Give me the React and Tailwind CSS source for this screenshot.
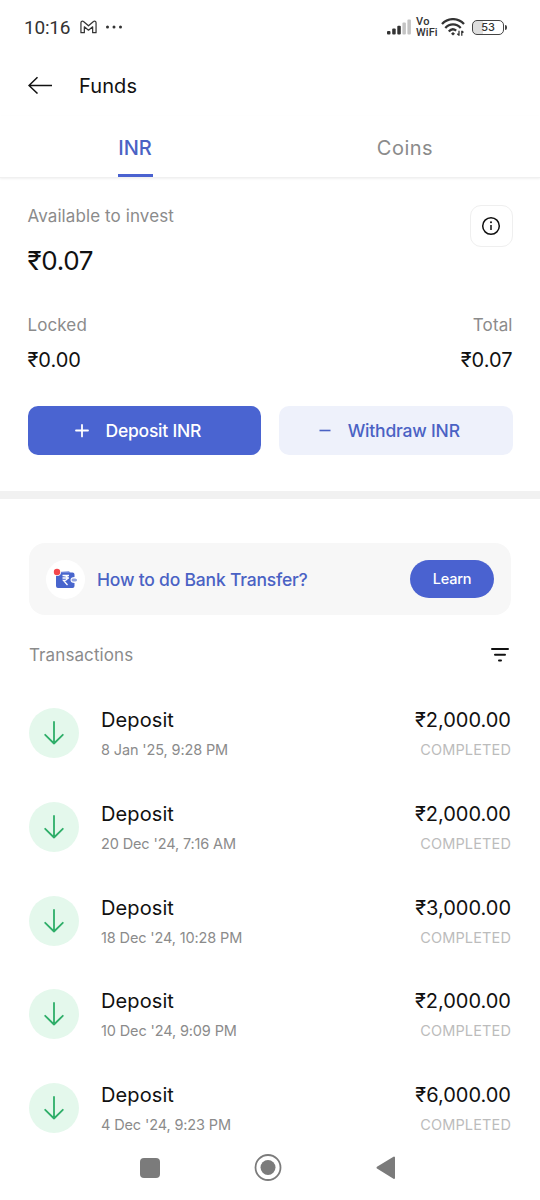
const transactions = [
  { date: "8 Jan '25, 9:28 PM", amount: '₹2,000.00' },
  { date: "20 Dec '24, 7:16 AM", amount: '₹2,000.00' },
  { date: "18 Dec '24, 10:28 PM", amount: '₹3,000.00' },
  { date: "10 Dec '24, 9:09 PM", amount: '₹2,000.00' },
  { date: "4 Dec '24, 9:23 PM", amount: '₹6,000.00' },
];

function StatusBar() {
  return (
    <div className="flex h-[54px] items-center pl-6 pr-[33px] text-[#333]">
      <span className="w-[47px] whitespace-nowrap pt-[2px] font-[Roboto,sans-serif] text-[19px] leading-6 tracking-[-0.2px]">10:16</span>
      <svg className="ml-[9px]" width="17" height="14" viewBox="0 0 18 14" fill="none" stroke="currentColor" strokeWidth="1.3" strokeLinejoin="round">
        <path d="M1 2.6C1 .8 2.7.3 3.7 1.2L9 5.700l5.300-4.500C15.300.3 17 .8 17 2.600V13h-3.600V6.800L9 10.400 4.600 6.800V13H1Z" />
      </svg>
      <svg className="ml-2" width="18" height="4" viewBox="0 0 18 4" fill="currentColor">
        <circle cx="2.500" cy="2" r="1.500" /><circle cx="9" cy="2" r="1.500" /><circle cx="15.500" cy="2" r="1.500" />
      </svg>
      <div className="ml-auto flex items-center">
        <svg width="24" height="16" viewBox="0 0 24 16" fill="currentColor">
          <rect x="0" y="12" width="3.500" height="3.500" rx="1" />
          <rect x="5.200" y="9.500" width="3.500" height="6" rx="1" />
          <rect x="10.300" y="6.800" width="3.500" height="8.700" rx="1" />
          <rect x="15.400" y="3.600" width="3.500" height="11.900" rx="1" fill="#c4c4c4" />
          <rect x="20.400" y="0.500" width="3.500" height="15" rx="1" fill="#c4c4c4" />
        </svg>
        <div className="ml-[5px] flex w-[22px] flex-col font-[Roboto,sans-serif] text-[11px] font-medium leading-[11px]">
          <span className="tracking-[0.5px]">Vo</span>
          <span className="tracking-[0.1px]">WiFi</span>
        </div>
        <svg className="ml-[3px]" width="24" height="18" viewBox="0 0 24 18" fill="none" stroke="currentColor" strokeWidth="2.300">
          <path d="M1 6C7-.5 17-.5 23 6M4.300 9.900C8.500 5.200 15.500 5.200 19.700 9.900M7.800 13.500c2.300-2.600 5.100-2.600 7.400-.9" />
          <path d="M12 13.900l2 1.800-2 1.800-2-1.800Z" fill="currentColor" stroke="none" />
          <path d="M18 12.800v5M20.800 12.800v5M16.300 15.800l1.700 1.500M22.500 14.500l-1.700-1.500" strokeWidth="1.300" />
        </svg>
        <div className="ml-[7px] flex h-[15px] w-[32px] items-center justify-center rounded-[5px] border-[1.500px] border-[#444] bg-linear-to-r from-[#dedede] from-35% to-white to-35% font-['Inter',sans-serif] text-[11px] font-medium leading-none">53</div>
        <div className="ml-px h-[5px] w-[2px] rounded-r-sm bg-[#444]" />
      </div>
    </div>
  );
}

function Header() {
  return (
    <header className="flex h-[62px] items-center pl-7">
      <svg width="25" height="18" viewBox="0 0 25 18" fill="none" stroke="#111" strokeWidth="1.500">
        <path d="M24 9.500H1M9.500 1.200 1 9.500l8.500 8" />
      </svg>
      <h1 className="ml-[26px] pt-px text-[20px] leading-6 tracking-[0.1px]">Funds</h1>
    </header>
  );
}

function Tabs() {
  return (
    <nav className="grid h-[62px] grid-cols-2 border-b border-[#f0f0f0] text-[20px] shadow-[0_1px_2px_rgba(0,0,0,0.06)]">
      <div className="flex flex-col items-center justify-between pt-5">
        <span className="font-medium leading-6 text-[#4a62c4]">INR</span>
        <span className="h-[3px] w-[35px] bg-[#4a62d0]" />
      </div>
      <div className="pt-5 text-center leading-6 tracking-[0.5px] text-[#8b8b8b]">Coins</div>
    </nav>
  );
}

function Balance() {
  return (
    <section className="h-[321px] border-b-8 border-[#f1f1f1] pl-[27.500px] pr-[27.500px] pt-[26px]">
      <div className="flex h-[109px] justify-between">
        <div>
          <p className="text-[17px] leading-6 tracking-[0.1px] text-[#8b8b8b]">Available to invest</p>
          <p className="mt-[17px] text-[26px] leading-8 tracking-[-0.300px]">₹0.07</p>
        </div>
        <div className="mt-[0.500px] flex size-[42.500px] items-center justify-center rounded-[11px] border border-[#efefef]">
          <svg width="20" height="20" viewBox="0 0 20 20" fill="none" stroke="#111" strokeWidth="1.500">
            <circle cx="10" cy="10" r="8.300" />
            <path d="M10 9v5" />
            <circle cx="10" cy="6.200" r="1" fill="#111" stroke="none" />
          </svg>
        </div>
      </div>
      <div className="flex justify-between">
        <div>
          <p className="text-[17px] leading-6 tracking-[0.1px] text-[#8b8b8b]">Locked</p>
          <p className="mt-[11px] text-[20px] leading-6">₹0.00</p>
        </div>
        <div className="text-right">
          <p className="text-[17px] leading-6 tracking-[0.1px] text-[#8b8b8b]">Total</p>
          <p className="mt-[11px] text-[20px] leading-6">₹0.07</p>
        </div>
      </div>
      <div className="mt-[34px] grid grid-cols-2 gap-[17.500px] text-[17.500px] font-medium">
        <button className="flex h-[49px] items-center rounded-[10px] bg-[#4a64d1] pl-[47.500px] text-white">
          <svg width="14" height="14" viewBox="0 0 14 14" stroke="currentColor" strokeWidth="1.800" strokeLinecap="round"><path d="M1 6.500h12M7 .9v11.500" /></svg>
          <span className="ml-[16.500px] pt-[2px] tracking-[-0.220px]">Deposit INR</span>
        </button>
        <button className="flex h-[49px] items-center rounded-[10px] bg-[#eef1fb] pl-[40px] text-[#4a62c4]">
          <svg width="12" height="4" viewBox="0 0 12 4" stroke="currentColor" strokeWidth="1.600"><path d="M.5 1.500h11" /></svg>
          <span className="ml-[17px] pt-[2px] tracking-[-0.200px]">Withdraw INR</span>
        </button>
      </div>
    </section>
  );
}

function WalletIcon() {
  return (
    <svg width="39" height="39" viewBox="0 0 39 39">
      <circle cx="19.500" cy="19.500" r="19.500" fill="#fff" />
      <path d="M15 11.700l8-.700 1.500 2H15Z" fill="#93a4e6" />
      <path d="M11 12.500h15.500a2 2 0 0 1 2 2V17c-2.500 0-4 1.200-4 3s1.500 3 4 3v3a2 2 0 0 1-2 2H12a2 2 0 0 1-2-2V13.500Z" fill="#4865cd" />
      <path d="M28 18.500c2 0 3 .5 3 1.500s-1 1.500-3 1.500-2.500-.7-2.500-1.500.5-1.500 2.500-1.500Z" fill="#91a2de" />
      <path d="M16.500 15.500H23M16.500 18H23M17.500 15.500c5 0 5 5 0 5l4 4.500" fill="none" stroke="#fff" strokeWidth="1.300" />
      <circle cx="11" cy="12" r="4" fill="#fff" />
      <circle cx="11" cy="12" r="3.200" fill="#f4474c" />
    </svg>
  );
}

function TransferBanner() {
  return (
    <div className="mx-[29px] mt-11 flex h-[72px] items-center rounded-2xl bg-[#f7f7f7] pl-[17px] pr-[17px]">
      <WalletIcon />
      <span className="ml-3 pt-[2px] text-[17.500px] font-medium tracking-[-0.200px] text-[#4a62c4]">How to do Bank Transfer?</span>
      <button className="ml-auto h-[38px] w-[84px] rounded-full bg-[#4a62d0] text-[14.500px] font-medium tracking-[-0.200px] text-white">Learn</button>
    </div>
  );
}

function Transaction({ item }) {
  return (
    <li className="flex h-[93.750px] pt-[11px]">
      <div className="flex size-[50px] items-center justify-center rounded-full bg-[#e4f8ec]">
        <svg width="20" height="24" viewBox="0 0 20 24" fill="none" stroke="#2eae69" strokeWidth="1.800" strokeLinecap="round" strokeLinejoin="round">
          <path d="M10 1v21.500M1.200 13.800 10 22.500l8.800-8.700" />
        </svg>
      </div>
      <div className="ml-[22px]">
        <p className="text-[20px] leading-6 tracking-[0.100px]">Deposit</p>
        <p className="mt-[8px] text-[14.500px] leading-[20px] tracking-[-0.130px] text-[#8b8b8b]">{item.date}</p>
      </div>
      <div className="ml-auto text-right">
        <p className="text-[20px] leading-6">{item.amount}</p>
        <p className="mt-[8px] text-[14.500px] leading-[20px] tracking-[0.150px] text-[#bcbcbc]">COMPLETED</p>
      </div>
    </li>
  );
}

function SystemNav() {
  return (
    <div className="flex h-[65px] items-center bg-white pl-[140px] pr-[144px]">
      <div className="size-5 rounded-[4px] bg-[#7b7b7b]" />
      <svg className="ml-[94px]" width="28" height="28" viewBox="0 0 28 28">
        <circle cx="14" cy="13.500" r="12.500" fill="none" stroke="#7b7b7b" strokeWidth="1.800" />
        <circle cx="14" cy="13.500" r="7.500" fill="#7b7b7b" />
      </svg>
      <svg className="ml-auto" width="20" height="24" viewBox="0 0 20 24">
        <path d="M18 1.500v20.500L1.500 11.700Z" fill="#7b7b7b" stroke="#7b7b7b" strokeWidth="2" strokeLinejoin="round" />
      </svg>
    </div>
  );
}

export default function App() {
  return (
    <div className="flex h-[1200px] w-[540px] flex-col overflow-hidden bg-white font-['Inter',sans-serif] text-[#111]">
      <StatusBar />
      <Header />
      <Tabs />
      <Balance />
      <main className="min-h-0 flex-1 overflow-hidden">
        <TransferBanner />
        <div className="mx-[29px] mt-[28px] flex h-6 items-center justify-between">
          <h2 className="pt-[2px] text-[17px] tracking-[0.100px] text-[#8b8b8b]">Transactions</h2>
          <svg className="mr-[2px]" width="18" height="14" viewBox="0 0 18 14" fill="none" stroke="#111" strokeWidth="2" strokeLinecap="round">
            <path d="M1 1h16M4 6.700h10M8 12.500h2" />
          </svg>
        </div>
        <ul className="mx-[29px] mt-[30px]">
          {transactions.map((item) => <Transaction key={item.date} item={item} />)}
        </ul>
      </main>
      <SystemNav />
    </div>
  );
}
